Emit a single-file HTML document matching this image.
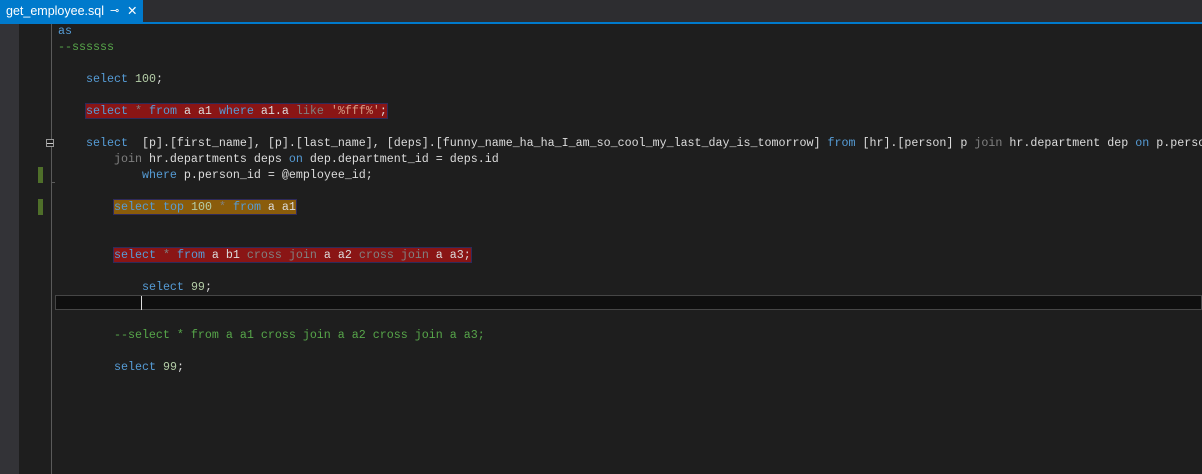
<!DOCTYPE html>
<html><head><style>
body{margin:0;width:1202px;height:474px;background:#1e1e1e;overflow:hidden;position:relative;font-family:"Liberation Mono",monospace}
.tabbar{position:absolute;left:0;top:0;width:1202px;height:22px;background:#2d2d30;border-bottom:2px solid #007acc}
.tab{position:absolute;left:0;top:0;width:143px;height:22px;background:#007acc;color:#fff;font:12.5px "Liberation Sans",sans-serif;line-height:22px}
.g1{position:absolute;left:0;top:24px;width:19px;height:450px;background:#333337}
.vl{position:absolute;left:51px;top:24px;width:1px;height:450px;background:#5a5a5a}
.ln{position:absolute;left:58px;height:16px;line-height:16px;font-size:11.67px;white-space:pre;color:#dcdcdc}
.k{color:#569cd6}.n{color:#b5cea8}.c{color:#57a64a}.s{color:#d69d85}.g{color:#808080}
.hr{background:#8a1515;box-shadow:0 0 0 1px #2f2a5a}
.ho{background:#8a5c0b;box-shadow:0 0 0 1px #2f2a5a}
.mk{position:absolute;left:38px;width:5px;height:16px;background:#4f6f2a}
</style></head><body>
<div class="tabbar"><div class="tab"><span style="position:absolute;left:6px">get_employee.sql</span><span style="position:absolute;left:110px;font-size:11px">⊸</span><span style="position:absolute;left:127px">✕</span></div></div>
<div class="g1"></div>
<div class="vl"></div>
<div style="position:absolute;left:46px;top:139px;width:8px;height:8px;border:1px solid #999;box-sizing:border-box;background:#1e1e1e"></div>
<div style="position:absolute;left:47px;top:143px;width:6px;height:1px;background:#ccc"></div>
<div style="position:absolute;left:51px;top:182px;width:4px;height:1px;background:#5a5a5a"></div>
<div class="mk" style="top:167px"></div>
<div class="mk" style="top:199px"></div>
<div style="position:absolute;left:55px;top:295px;width:1147px;height:15px;background:#0f0f0f;border:1px solid #464646;box-sizing:border-box"></div>
<div style="position:absolute;left:141px;top:296px;width:1px;height:14px;background:#ddd"></div>

<div class="ln k" style="top:23px">as</div>
<div class="ln c" style="top:39px">--ssssss</div>
<div class="ln" style="top:71px">    <span class="k">select</span> <span class="n">100</span>;</div>
<div class="ln" style="top:103px">    <span class="hr"><span class="k">select</span> <span class="g">*</span> <span class="k">from</span> a a1 <span class="k">where</span> a1.a <span class="g">like</span> <span class="s">'%fff%'</span>;</span></div>
<div class="ln" style="top:135px">    <span class="k">select</span>  [p].[first_name], [p].[last_name], [deps].[funny_name_ha_ha_I_am_so_cool_my_last_day_is_tomorrow] <span class="k">from</span> [hr].[person] p <span class="g">join</span> hr.department dep <span class="k">on</span> p.person_id</div>
<div class="ln" style="top:151px">        <span class="g">join</span> hr.departments deps <span class="k">on</span> dep.department_id = deps.id</div>
<div class="ln" style="top:167px">            <span class="k">where</span> p.person_id = @employee_id;</div>
<div class="ln" style="top:199px">        <span class="ho"><span class="k">select</span> <span class="k">top</span> <span class="n">100</span> <span class="g">*</span> <span class="k">from</span> a a1</span></div>
<div class="ln" style="top:247px">        <span class="hr"><span class="k">select</span> <span class="g">*</span> <span class="k">from</span> a b1 <span class="g">cross join</span> a a2 <span class="g">cross join</span> a a3;</span></div>
<div class="ln" style="top:279px">            <span class="k">select</span> <span class="n">99</span>;</div>
<div class="ln c" style="top:327px">        --select * from a a1 cross join a a2 cross join a a3;</div>
<div class="ln" style="top:359px">        <span class="k">select</span> <span class="n">99</span>;</div>
</body></html>
